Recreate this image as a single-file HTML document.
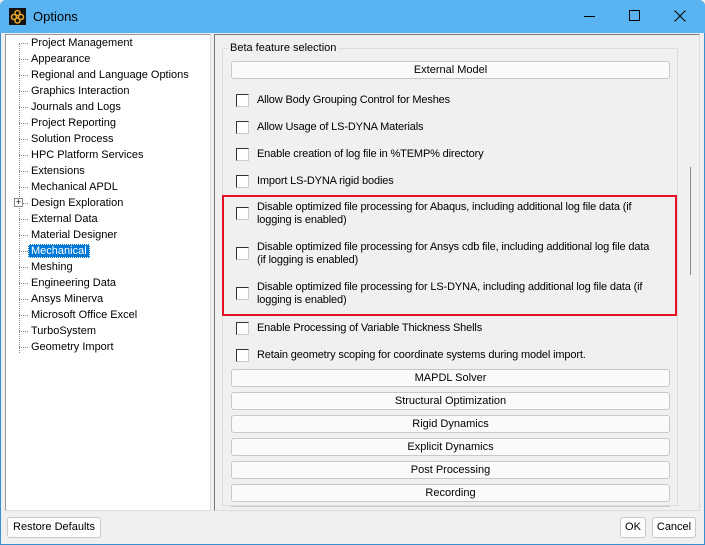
<!DOCTYPE html>
<html><head><style>
*{margin:0;padding:0;box-sizing:border-box}
body{width:705px;height:545px;background:#f0f0f0;font-family:"Liberation Sans",sans-serif;font-size:11px;color:#000;position:relative;overflow:hidden}
.a{position:absolute;white-space:nowrap}
.tree .i{position:absolute;left:31px;height:14px;line-height:14px}
.dot{position:absolute;left:19px;width:9px;border-top:1px dotted #888}
.cb{position:absolute;left:236px;width:13px;height:13px;border:1px solid #333;background:#fff;border-right-color:#ccc;border-bottom-color:#ccc}
.lb{position:absolute;left:257px;line-height:13px;letter-spacing:-0.15px}
.btn{position:absolute;left:231px;width:439px;height:18px;border:1px solid #c8c8c8;border-radius:3px;background:#fafafa;text-align:center;line-height:16px}
.b2{position:absolute;height:21px;border:1px solid #c8c8c8;border-radius:3px;background:#fdfdfd;text-align:center;line-height:19px}
</style></head><body>
<div class="a" style="left:0;top:0;width:705px;height:545px;border:1px solid #3a8fd0;border-radius:6px 6px 0 0"></div>
<div class="a" style="left:0;top:0;width:705px;height:33px;background:#58b3f0;border-radius:6px 6px 0 0"></div>
<svg class="a" style="left:9px;top:8px" width="17" height="17" viewBox="0 0 17 17"><rect width="17" height="17" fill="#111"/><g fill="none" stroke="#e2a42a" stroke-width="1.6"><circle cx="8.5" cy="5" r="2.5"/><circle cx="5" cy="9" r="2.5"/><circle cx="12" cy="9" r="2.5"/><circle cx="8.5" cy="12.5" r="2.5"/></g></svg>
<div class="a" style="left:33px;top:9px;font-size:13px">Options</div>
<div class="a" style="left:584px;top:16px;width:11px;border-top:1px solid #000"></div>
<div class="a" style="left:629px;top:10px;width:11px;height:11px;border:1px solid #000"></div>
<svg class="a" style="left:674px;top:10px" width="12" height="12" viewBox="0 0 12 12"><path d="M0.5 0.5L11.5 11.5M11.5 0.5L0.5 11.5" stroke="#000" stroke-width="1"/></svg>

<div class="a tree" style="left:5px;top:34px;width:206px;height:477px;background:#fff;border:1px solid #999;border-right-color:#ddd;border-bottom-color:#ddd">
<div class="a" style="left:13px;top:8px;height:310px;border-left:1px dotted #888"></div>
</div>
<div class="tree">
<div class="dot" style="top:43px"></div><div class="i" style="top:36px">Project Management</div>
<div class="dot" style="top:59px"></div><div class="i" style="top:52px">Appearance</div>
<div class="dot" style="top:75px"></div><div class="i" style="top:68px">Regional and Language Options</div>
<div class="dot" style="top:91px"></div><div class="i" style="top:84px">Graphics Interaction</div>
<div class="dot" style="top:107px"></div><div class="i" style="top:100px">Journals and Logs</div>
<div class="dot" style="top:123px"></div><div class="i" style="top:116px">Project Reporting</div>
<div class="dot" style="top:139px"></div><div class="i" style="top:132px">Solution Process</div>
<div class="dot" style="top:155px"></div><div class="i" style="top:148px">HPC Platform Services</div>
<div class="dot" style="top:171px"></div><div class="i" style="top:164px">Extensions</div>
<div class="dot" style="top:187px"></div><div class="i" style="top:180px">Mechanical APDL</div>
<div class="dot" style="top:203px"></div><div class="i" style="top:196px">Design Exploration</div>
<div class="a" style="left:14px;top:198px;width:9px;height:9px;border:1px solid #888;background:#fff;font-size:9px;line-height:7px;text-align:center">+</div>
<div class="dot" style="top:219px"></div><div class="i" style="top:212px">External Data</div>
<div class="dot" style="top:235px"></div><div class="i" style="top:228px">Material Designer</div>
<div class="dot" style="top:251px"></div><div class="i" style="top:244px;left:28px;padding:0 3px;background:#0078d7;color:#fff;outline:1px dotted #fff;outline-offset:-1px">Mechanical</div>
<div class="dot" style="top:267px"></div><div class="i" style="top:260px">Meshing</div>
<div class="dot" style="top:283px"></div><div class="i" style="top:276px">Engineering Data</div>
<div class="dot" style="top:299px"></div><div class="i" style="top:292px">Ansys Minerva</div>
<div class="dot" style="top:315px"></div><div class="i" style="top:308px">Microsoft Office Excel</div>
<div class="dot" style="top:331px"></div><div class="i" style="top:324px">TurboSystem</div>
<div class="dot" style="top:347px"></div><div class="i" style="top:340px">Geometry Import</div>
</div>

<div class="a" style="left:214px;top:34px;width:486px;height:477px;border:1px solid #777;border-right-color:#ddd;border-bottom-color:#ddd"></div>
<div class="a" style="left:690px;top:167px;width:1px;height:108px;background:#888"></div>
<div class="a" style="left:222px;top:48px;width:456px;height:458px;border:1px solid #dcdcdc"></div>
<div class="a" style="left:228px;top:42px;background:#f0f0f0;padding:0 2px">Beta feature selection</div>
<div class="btn" style="top:61px">External Model</div>

<div class="cb" style="top:94px"></div><div class="lb" style="top:94px">Allow Body Grouping Control for Meshes</div>
<div class="cb" style="top:121px"></div><div class="lb" style="top:121px">Allow Usage of LS-DYNA Materials</div>
<div class="cb" style="top:148px"></div><div class="lb" style="top:148px">Enable creation of log file in %TEMP% directory</div>
<div class="cb" style="top:175px"></div><div class="lb" style="top:175px">Import LS-DYNA rigid bodies</div>
<div class="cb" style="top:207px"></div><div class="lb" style="top:201px">Disable optimized file processing for Abaqus, including additional log file data (if<br>logging is enabled)</div>
<div class="cb" style="top:247px"></div><div class="lb" style="top:241px">Disable optimized file processing for Ansys cdb file, including additional log file data<br>(if logging is enabled)</div>
<div class="cb" style="top:287px"></div><div class="lb" style="top:281px">Disable optimized file processing for LS-DYNA, including additional log file data (if<br>logging is enabled)</div>
<div class="a" style="left:222px;top:195px;width:455px;height:121px;border:2px solid #e81123"></div>
<div class="cb" style="top:322px"></div><div class="lb" style="top:322px">Enable Processing of Variable Thickness Shells</div>
<div class="cb" style="top:349px"></div><div class="lb" style="top:349px">Retain geometry scoping for coordinate systems during model import.</div>

<div class="btn" style="top:369px">MAPDL Solver</div>
<div class="btn" style="top:392px">Structural Optimization</div>
<div class="btn" style="top:415px">Rigid Dynamics</div>
<div class="btn" style="top:438px">Explicit Dynamics</div>
<div class="btn" style="top:461px">Post Processing</div>
<div class="btn" style="top:484px">Recording</div>
<div class="a" style="left:231px;top:506px;width:439px;border-top:1px solid #ccc"></div>

<div class="b2" style="left:7px;top:517px;width:94px">Restore Defaults</div>
<div class="b2" style="left:620px;top:517px;width:26px">OK</div>
<div class="b2" style="left:652px;top:517px;width:44px">Cancel</div>
</body></html>
